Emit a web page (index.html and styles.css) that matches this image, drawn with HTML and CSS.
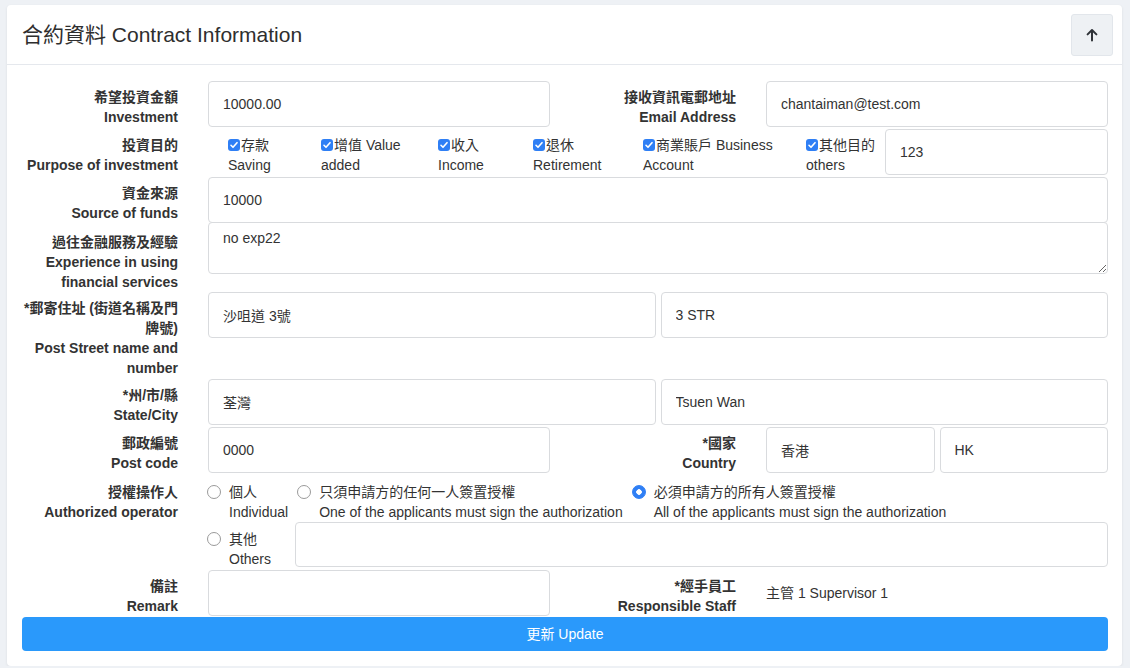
FILE: index.html
```html
<!DOCTYPE html>
<html lang="zh-Hant">
<head>
<meta charset="utf-8">
<title>合約資料 Contract Information</title>
<link rel="stylesheet" href="styles.css">
</head>
<body>
<div class="page">
  <section class="card">
    <header class="card-head">
      <h1 class="title">合約資料 Contract Information</h1>
      <button class="up-btn" type="button" aria-label="Collapse">
        <svg width="14" height="14" viewBox="0 0 14 14"><path d="M7 12.5V2.2M2.6 6.4L7 2l4.4 4.4" fill="none" stroke="#2f3338" stroke-width="2" stroke-linecap="round" stroke-linejoin="round"/></svg>
      </button>
    </header>
    <form class="card-body">
      <div class="row">
        <label class="lbl">希望投資金額<br>Investment</label>
        <input class="field" type="text" value="10000.00">
        <label class="lbl">接收資訊電郵地址<br>Email Address</label>
        <input class="field" type="text" value="chantaiman@test.com">
      </div>

      <div class="row">
        <label class="lbl">投資目的<br>Purpose of investment</label>
        <div class="span3 purpose">
          <label class="chk"><span class="cb"><svg width="12" height="12" viewBox="0 0 12 12"><path d="M3 6.3l2 2 4-4.6" fill="none" stroke="#fff" stroke-width="1.6" stroke-linecap="round" stroke-linejoin="round"/></svg></span>存款<br>Saving</label>
          <label class="chk"><span class="cb"><svg width="12" height="12" viewBox="0 0 12 12"><path d="M3 6.3l2 2 4-4.6" fill="none" stroke="#fff" stroke-width="1.6" stroke-linecap="round" stroke-linejoin="round"/></svg></span>增值 Value<br>added</label>
          <label class="chk"><span class="cb"><svg width="12" height="12" viewBox="0 0 12 12"><path d="M3 6.3l2 2 4-4.6" fill="none" stroke="#fff" stroke-width="1.6" stroke-linecap="round" stroke-linejoin="round"/></svg></span>收入<br>Income</label>
          <label class="chk"><span class="cb"><svg width="12" height="12" viewBox="0 0 12 12"><path d="M3 6.3l2 2 4-4.6" fill="none" stroke="#fff" stroke-width="1.6" stroke-linecap="round" stroke-linejoin="round"/></svg></span>退休<br>Retirement</label>
          <label class="chk"><span class="cb"><svg width="12" height="12" viewBox="0 0 12 12"><path d="M3 6.3l2 2 4-4.6" fill="none" stroke="#fff" stroke-width="1.6" stroke-linecap="round" stroke-linejoin="round"/></svg></span>商業賬戶 Business<br>Account</label>
          <label class="chk"><span class="cb"><svg width="12" height="12" viewBox="0 0 12 12"><path d="M3 6.3l2 2 4-4.6" fill="none" stroke="#fff" stroke-width="1.6" stroke-linecap="round" stroke-linejoin="round"/></svg></span>其他目的<br>others</label>
          <input class="field" type="text" value="123">
        </div>
      </div>

      <div class="row row-tight">
        <label class="lbl">資金來源<br>Source of funds</label>
        <input class="field span3" type="text" value="10000">
      </div>

      <div class="row row-flush">
        <label class="lbl lbl-ta">過往金融服務及經驗<br>Experience in using<br>financial services</label>
        <textarea class="field area span3">no exp22</textarea>
      </div>

      <div class="row row-1">
        <label class="lbl">*郵寄住址 (街道名稱及門<br>牌號)<br>Post Street name and<br>number</label>
        <div class="span3 pair">
          <input class="field" type="text" value="沙咀道 3號">
          <input class="field" type="text" value="3 STR">
        </div>
      </div>

      <div class="row">
        <label class="lbl">*州/市/縣<br>State/City</label>
        <div class="span3 pair">
          <input class="field" type="text" value="荃灣">
          <input class="field" type="text" value="Tsuen Wan">
        </div>
      </div>

      <div class="row">
        <label class="lbl">郵政編號<br>Post code</label>
        <input class="field" type="text" value="0000">
        <label class="lbl">*國家<br>Country</label>
        <div class="pair">
          <input class="field" type="text" value="香港">
          <input class="field" type="text" value="HK">
        </div>
      </div>

      <div class="row row-flush">
        <label class="lbl lbl-rd">授權操作人<br>Authorized operator</label>
        <div class="span3 radios">
          <label class="opt"><span class="rd"></span><span>個人<br>Individual</span></label>
          <label class="opt"><span class="rd"></span><span>只須申請方的任何一人簽置授權<br>One of the applicants must sign the authorization</span></label>
          <label class="opt"><span class="rd rd-on"></span><span>必須申請方的所有人簽置授權<br>All of the applicants must sign the authorization</span></label>
        </div>
      </div>

      <div class="row row-1">
        <span class="lbl"></span>
        <div class="span3 other">
          <label class="opt opt-other"><span class="rd"></span><span>其他<br>Others</span></label>
          <input class="field field-other" type="text" value="">
        </div>
      </div>

      <div class="row row-1">
        <label class="lbl">備註<br>Remark</label>
        <input class="field" type="text" value="">
        <label class="lbl">*經手員工<br>Responsible Staff</label>
        <div class="static">主管 1 Supervisor 1</div>
      </div>

      <button class="submit" type="button">更新 Update</button>
    </form>
  </section>
</div>
</body>
</html>
```

FILE: styles.css
```css
* { box-sizing: border-box; }

html, body {
  margin: 0;
  padding: 0;
  background: #eef1f5;
}

body {
  font-family: "Liberation Sans", "Noto Sans CJK TC", Arial, sans-serif;
  font-size: 14px;
  line-height: 20px;
  color: #333;
}

.page {
  padding: 5px 8px 0 7px;
}

.card {
  background: #fff;
  border-radius: 4px;
  box-shadow: 0 1px 3px rgba(0, 0, 0, 0.08);
}

.card-head {
  display: flex;
  align-items: center;
  justify-content: space-between;
  padding: 9px 9px 8px 15px;
  border-bottom: 1px solid #e5e8ed;
}

.title {
  margin: 0;
  font-size: 21px;
  font-weight: normal;
  line-height: 24px;
  color: #2e2e2e;
}

.up-btn {
  width: 42px;
  height: 42px;
  padding: 0;
  display: flex;
  align-items: center;
  justify-content: center;
  background: #eef1f4;
  border: 1px solid #e2e6eb;
  border-radius: 3px;
}

.card-body {
  padding: 16px 14px 15px 15px;
}

.row {
  display: grid;
  grid-template-columns: 156px 342px 156px 342px;
  column-gap: 30px;
  align-items: start;
  margin-bottom: 2px;
}

.row-tight { margin-bottom: -1px; }
.row-flush { margin-bottom: 0; }
.row-1 { margin-bottom: 1px; }

.span3 { grid-column: 2 / 5; }

.lbl {
  display: block;
  text-align: right;
  font-weight: bold;
  padding-top: 6px;
  white-space: nowrap;
  color: #333;
}

.lbl-ta { padding-top: 10px; }
.lbl-rd { padding-top: 7px; }

.field {
  display: block;
  width: 100%;
  height: 46px;
  margin: 0;
  padding: 0 14px;
  font: inherit;
  color: #333;
  background: #fff;
  border: 1px solid #d9dbde;
  border-radius: 4px;
  outline: none;
}

.area {
  height: 52px;
  padding: 5px 14px;
  line-height: 20px;
  resize: vertical;
}

.pair {
  display: grid;
  grid-template-columns: 1fr 1fr;
  column-gap: 5px;
}

.purpose {
  display: grid;
  grid-template-columns: 93px 117px 95px 110px 163px 79px 1fr;
  padding-left: 20px;
}

.chk {
  padding-top: 6px;
  white-space: nowrap;
  color: #333;
}

.cb {
  display: inline-block;
  width: 12px;
  height: 12px;
  margin-right: 1px;
  vertical-align: -1px;
  background: #2f7ff5;
  border-radius: 3px;
}

.cb svg { display: block; }

.radios {
  display: flex;
  column-gap: 9px;
  padding-top: 7px;
  margin-left: -1px;
}

.opt {
  display: flex;
  align-items: flex-start;
  white-space: nowrap;
  color: #333;
}

.rd {
  flex: none;
  width: 14px;
  height: 14px;
  margin: 3px 8px 0 0;
  border: 1px solid #9a9a9a;
  border-radius: 50%;
  background: #fff;
}

.rd-on {
  border-color: #2f7ff5;
  background: radial-gradient(circle, #fff 0 2.5px, #2f7ff5 3px);
}

.other {
  display: flex;
  margin-left: -1px;
}

.opt-other {
  width: 88px;
  flex: none;
  padding-top: 7px;
}

.other .field { flex: 1; }

.field-other { height: 45px; }

.static {
  padding-top: 13px;
  color: #333;
}

.submit {
  display: block;
  width: 100%;
  height: 34px;
  padding: 0;
  font: inherit;
  color: #fff;
  background: #2a99fb;
  border: none;
  border-radius: 4px;
}
```
